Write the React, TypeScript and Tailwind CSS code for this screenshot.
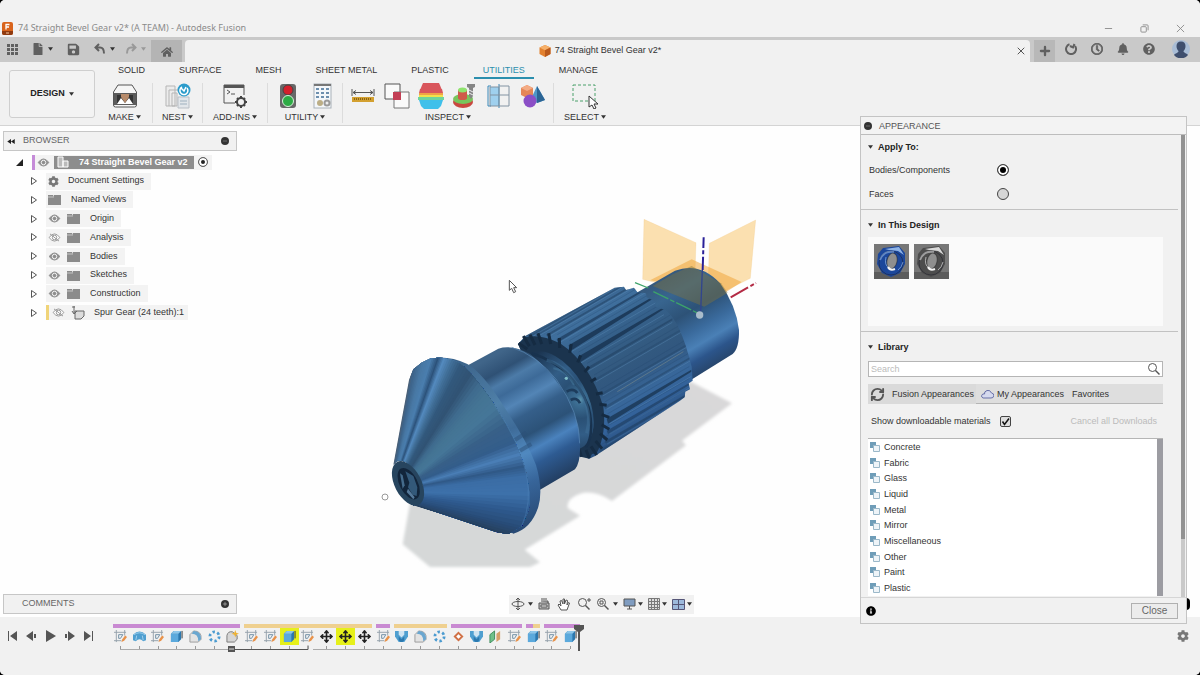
import type { ReactNode } from "react";
import {
  FaBell,
  FaCog,
  FaFile,
  FaHome,
  FaInfoCircle,
  FaQuestionCircle,
  FaRegClock,
  FaSave,
} from "react-icons/fa";
import { Minus, Move, Plus, RefreshCw, X } from "lucide-react";

type Point = [number, number];

const ribbonTabs = ["SOLID", "SURFACE", "MESH", "SHEET METAL", "PLASTIC", "UTILITIES", "MANAGE"];

const materials = [
  "Concrete",
  "Fabric",
  "Glass",
  "Liquid",
  "Metal",
  "Mirror",
  "Miscellaneous",
  "Other",
  "Paint",
  "Plastic",
];

function Caret({ className = "text-[#333]" }: { className?: string }) {
  return (
    <svg viewBox="0 0 6 4" className={`h-1 w-[5px] shrink-0 ${className}`} aria-hidden="true">
      <path d="M0 0h6L3 4z" fill="currentColor" />
    </svg>
  );
}

function Magnifier({ children }: { children?: ReactNode }) {
  return (
    <svg viewBox="0 0 14 14" className="size-[14px]" fill="none" stroke="currentColor" aria-hidden="true">
      <circle cx="5.500" cy="5.500" r="4" />
      <path d="M8.500 8.500l4 4" strokeWidth="1.500" />
      {children}
    </svg>
  );
}

/* ---------- title bar and tab strip ---------- */

function TitleBar() {
  return (
    <div className="flex h-[37px] items-end justify-between bg-[#f2f2f2] pb-[2px] pl-[2px] pr-[15px] text-[#8a8a8a]">
      <div className="flex items-center gap-1">
        <svg viewBox="0 0 12 13" className="h-[13px] w-3" aria-hidden="true">
          <rect width="11" height="13" rx="2" fill="#d9641c" />
          <path d="M0 9h11v2a2 2 0 0 1-2 2H2a2 2 0 0 1-2-2z" fill="#8f3a10" />
          <path d="M4 7.500V2.500h3.500M4 5h3" stroke="#fff" strokeWidth="1.300" fill="none" />
          <path d="M4 11h3" stroke="#f7c9a5" strokeWidth="1" />
        </svg>
        <h1 className="font-['Noto_Sans','Liberation_Sans',sans-serif] text-[9px] leading-[14px]">
          74 Straight Bevel Gear v2* (A TEAM) - Autodesk Fusion
        </h1>
      </div>
      <div className="flex h-[14px] items-center gap-[27px]">
        <button aria-label="Minimize">
          <svg viewBox="0 0 10 10" className="size-[9px]">
            <path d="M1 5h8" stroke="currentColor" />
          </svg>
        </button>
        <button aria-label="Restore">
          <svg viewBox="0 0 10 10" className="size-[9px]" fill="none" stroke="currentColor">
            <rect x="1" y="3" width="6" height="6" rx="1" />
            <path d="M3 1h5a1 1 0 0 1 1 1v5" />
          </svg>
        </button>
        <button aria-label="Close window">
          <svg viewBox="0 0 10 10" className="size-[9px]">
            <path d="M1 1l8 8M9 1l-8 8" stroke="currentColor" />
          </svg>
        </button>
      </div>
    </div>
  );
}

function TabStrip() {
  return (
    <div className="flex h-[25px] items-stretch bg-[#c9c9c9] pt-[3px] text-[#606060]">
      <div className="flex w-[151px] shrink-0 items-center pb-1 pl-[7px]">
        <button aria-label="Show data panel">
          <svg viewBox="0 0 11 11" className="size-[11px]" fill="currentColor">
            <path d="M0 0h3v3H0zM4 0h3v3H4zM8 0h3v3H8zM0 4h3v3H0zM4 4h3v3H4zM8 4h3v3H8zM0 8h3v3H0zM4 8h3v3H4zM8 8h3v3H8z" />
          </svg>
        </button>
        <button aria-label="File" className="ml-[14px] flex items-center gap-1">
          <FaFile className="size-3" />
          <Caret />
        </button>
        <button aria-label="Save" className="ml-[14px]">
          <FaSave className="size-[13px]" />
        </button>
        <button aria-label="Undo" className="ml-[14px] flex items-center gap-1">
          <svg viewBox="0 0 12 12" className="size-3" fill="none" stroke="currentColor" strokeWidth="2">
            <path d="M5 1L1.500 4.500 5 8M2 4.500h4q4 0 4 6" />
          </svg>
          <Caret />
        </button>
        <button aria-label="Redo" className="ml-[10px] flex items-center gap-1 text-[#999]">
          <svg viewBox="0 0 12 12" className="size-3" fill="none" stroke="currentColor" strokeWidth="2">
            <path d="M7 1l3.500 3.500L7 8M10 4.500H6q-4 0-4 6" />
          </svg>
          <Caret className="text-[#999]" />
        </button>
      </div>
      <button aria-label="Home" className="flex w-[31px] shrink-0 items-center justify-center bg-[#b4b4b4] pt-[2px]">
        <FaHome className="size-3" />
      </button>
      <div className="ml-[3px] flex grow items-center rounded-t-sm bg-[#f1f1f1] pr-[3px]">
        <span className="flex grow items-center justify-center gap-1 text-[9px] text-[#333]">
          <svg viewBox="0 0 12 12" className="size-3" aria-hidden="true">
            <path d="M6 0l5.500 2.500v6.500L6 12 .5 9V2.500z" fill="#e2812f" />
            <path d="M6 0l5.500 2.500L6 5.200.5 2.500z" fill="#f6b06a" />
            <path d="M6 5.200V12l5.500-3V2.500z" fill="#b95a1d" />
          </svg>
          74 Straight Bevel Gear v2*
        </span>
        <button aria-label="Close tab" className="text-[#555]">
          <X className="size-3" />
        </button>
      </div>
      <div className="flex w-[170px] shrink-0 items-center pl-1">
        <button aria-label="New tab" className="flex h-full w-[21px] items-center justify-center bg-[#b8b8b8]">
          <Plus className="size-[14px]" strokeWidth={4} />
        </button>
        <div className="flex items-center gap-[14px] pb-1 pl-[10px]">
          <button aria-label="Extensions">
            <svg viewBox="0 0 12 12" className="size-3" fill="none" stroke="currentColor" strokeWidth="2">
              <path d="M4.500 1.300a5 5 0 1 0 5.500 1.700" />
              <path d="M5 3l3 1.500L9.500 1" strokeWidth="2" />
            </svg>
          </button>
          <button aria-label="Job status">
            <FaRegClock className="size-3" stroke="currentColor" strokeWidth="30" />
          </button>
          <button aria-label="Notifications">
            <FaBell className="size-3" />
          </button>
          <button aria-label="Help">
            <FaQuestionCircle className="size-3" />
          </button>
          <button aria-label="Account" className="ml-[3px]">
            <svg viewBox="0 0 18 18" className="size-[18px]">
              <circle cx="9" cy="9" r="9" fill="#a9bdd6" />
              <path d="M9 1.500c-3 0-4.500 2-4.500 4.500s1 4 2 5c0 2-3 2-4.500 4a9 9 0 0 0 14 0c-1.500-2-4.500-2-4.500-4 1-1 2-2.500 2-5S12 1.500 9 1.500z" fill="#3f4f6e" />
            </svg>
          </button>
        </div>
      </div>
    </div>
  );
}

/* ---------- ribbon ---------- */

function ToolIcon({ label, children }: { label: string; children: ReactNode }) {
  return (
    <button aria-label={label} title={label} className="flex w-[34px] justify-center">
      <svg viewBox="0 0 26 26" className="size-[26px]" fill="none">
        {children}
      </svg>
    </button>
  );
}

function ToolGroup({ name, width, last = false, children }: { name: string; width: string; last?: boolean; children: ReactNode }) {
  return (
    <div className={`flex flex-col items-center gap-[2px] ${width} ${last ? "" : "border-r border-[#dcdcdc]"}`}>
      <div className="flex">{children}</div>
      <button className="flex items-center gap-[2px] text-[9px] leading-3 text-[#333]">
        {name}
        <Caret />
      </button>
    </div>
  );
}

function Ribbon() {
  return (
    <div className="flex h-16 border-b border-[#d4d4d4] bg-[#f1f1f1] pl-[9px]">
      <button className="mt-2 flex h-12 w-[86px] shrink-0 items-center justify-center gap-1 rounded-[3px] border border-[#cfcfcf] bg-[#f3f3f3] text-[9px] font-bold text-[#222]">
        DESIGN
        <Caret />
      </button>
      <div className="ml-[2px] flex flex-col">
        <nav className="flex h-[17px] gap-4 pl-3 text-[9px] text-[#333]">
          {ribbonTabs.map((tab) => (
            <a
              key={tab}
              href="#"
              className={`whitespace-nowrap px-[9px] pt-px leading-[14px] ${
                tab === "UTILITIES" ? "border-b-2 border-[#2b8fae] text-[#2b8fae]" : ""
              }`}
            >
              {tab}
            </a>
          ))}
        </nav>
        <div className="mt-1 flex">
          <ToolGroup name="MAKE" width="w-14">
            <ToolIcon label="3D Print">
              <path d="M1.500 9L6 2h14l4.500 7v13a2 2 0 0 1-2 2h-19a2 2 0 0 1-2-2z" fill="#f5f5f5" stroke="#555" />
              <path d="M2 10h22v12H2z" fill="#5b5b5b" />
              <path d="M5 12h16v9H5z" fill="#333" />
              <path d="M5 21l4-6 4 5 4-5 4 6z" fill="#fff" />
              <path d="M9 11h8v3l-4 6-4-6z" fill="#b78b6b" />
            </ToolIcon>
          </ToolGroup>
          <ToolGroup name="NEST" width="w-[50px]">
            <ToolIcon label="Nest">
              <path d="M1 3h9v20H1zM4 7h9M4 7v16M7 10h5v13H7z" stroke="#b5b5b5" fill="#ececec" />
              <path d="M13 14h11v11H13z" fill="#e2e6ea" stroke="#b9bfc6" />
              <path d="M15 18h7M15 21h7" stroke="#9eb0be" />
              <circle cx="19" cy="7" r="6.500" fill="#2c9ccb" />
              <path d="M17 4a4 4 0 1 0 5 1M16 5l3 3 2-4" stroke="#fff" strokeWidth="1.500" />
            </ToolIcon>
          </ToolGroup>
          <ToolGroup name="ADD-INS" width="w-[65px]">
            <ToolIcon label="Scripts and Add-Ins">
              <path d="M13 20H2V2h20v10" stroke="#555" />
              <path d="M2 2h20v3H2z" fill="#555" />
              <path d="M5 7l3 2-3 2M9 11h4" stroke="#555" />
              <circle cx="19" cy="19" r="4" stroke="#444" strokeWidth="2" />
              <path d="M19 13v2M19 23v2M13 19h2M23 19h2M15 15l1 1M22 22l1 1M15 23l1-1M22 16l1-1" stroke="#444" strokeWidth="2" />
            </ToolIcon>
          </ToolGroup>
          <ToolGroup name="UTILITY" width="w-[75px]">
            <ToolIcon label="Compute">
              <rect x="5" y="1" width="16" height="24" rx="3" fill="#686868" />
              <circle cx="13" cy="7" r="5" fill="#d5202c" stroke="#444" />
              <circle cx="13" cy="18" r="5.500" fill="#2dab45" stroke="#d9f2dd" />
            </ToolIcon>
            <ToolIcon label="Parameters">
              <rect x="5" y="1" width="17" height="24" fill="#f4f7fa" stroke="#aab2ba" />
              <path d="M5 2h17" stroke="#777" strokeWidth="2" />
              <path d="M7 6h13M7 10h13M7 14h13" stroke="#6d8fae" strokeWidth="2" strokeDasharray="3 2" />
              <circle cx="11" cy="20" r="3" fill="#bcae86" />
              <circle cx="18" cy="20" r="3.500" fill="#9a9a9a" />
              <circle cx="18" cy="20" r="1.500" fill="#eee" />
            </ToolIcon>
          </ToolGroup>
          <ToolGroup name="INSPECT" width="w-[211px]">
            <ToolIcon label="Measure">
              <path d="M2 6v7M24 6v7M3 9.500h20M6 7.500l-3 2 3 2M20 7.500l3 2-3 2" stroke="#555" />
              <path d="M2 14h22v5H2z" fill="#d3a030" />
              <path d="M4 16h18" stroke="#8a6415" strokeWidth="2" strokeDasharray="1 1" />
            </ToolIcon>
            <ToolIcon label="Interference">
              <path d="M1 1h15v15H1z" fill="#fafafa" stroke="#555" />
              <path d="M10 9h15v16H10z" fill="#fafafa" stroke="#777" />
              <path d="M9 9h8v8H9z" fill="#c23f55" />
            </ToolIcon>
            <ToolIcon label="Zebra Analysis">
              <path d="M5 0h16l3 7H2z" fill="#d9565c" />
              <path d="M2 6h22l1 4H1z" fill="#d9565c" />
              <path d="M1 10h24v2H1z" fill="#f0a445" />
              <path d="M1 12h24v2H1z" fill="#f2e24b" />
              <path d="M0 14h26v3H0z" fill="#6fd49c" />
              <path d="M1 17h24l-2 6-3 3H6l-3-3z" fill="#3fc0ea" />
            </ToolIcon>
            <ToolIcon label="Accessibility">
              <ellipse cx="11" cy="19" rx="10" ry="6" fill="#c9473f" />
              <ellipse cx="11" cy="16" rx="10" ry="5" fill="#77c55c" />
              <path d="M6 7h9v8H6z" fill="#cf5a4a" />
              <ellipse cx="10.500" cy="7" rx="4.500" ry="2.500" fill="#8fe36e" />
              <ellipse cx="10.500" cy="15" rx="4.500" ry="2" fill="#cf5a4a" />
              <path d="M15 1h8v3l-2 1v8l-2 3-2-3V5l-2-1z" fill="#858585" />
              <path d="M17 7l4 2M17 10l4 2" stroke="#eee" />
            </ToolIcon>
            <ToolIcon label="Component Color Cycling">
              <path d="M4 4h9v19H4z" fill="#9fd0ee" />
              <path d="M5 3H2v20h3M13 1v24" stroke="#3b88b8" />
              <path d="M4 12h19M13 3h10v20H13M4 4h9v19H4z" stroke="#8293a2" />
            </ToolIcon>
            <ToolIcon label="Display Mesh Face Groups">
              <path d="M7 2l6 3v7l-6 3-6-3V5z" fill="#e58656" />
              <path d="M1 5l6 3 6-3-6-3z" fill="#f3ab84" />
              <path d="M17 3l8 14-8 3-6-4z" fill="#4f96c8" />
              <path d="M17 3l8 14-8 3z" fill="#2c6595" />
              <circle cx="10" cy="18" r="6.500" fill="#8b4fc6" />
            </ToolIcon>
          </ToolGroup>
          <ToolGroup name="SELECT" width="w-[62px]" last>
            <ToolIcon label="Select">
              <path d="M1 2h22v16H1z" stroke="#4ba06a" strokeDasharray="3 2" />
              <path d="M17 13v11l3-2 2 4 2-1-2-4h4z" fill="#fff" stroke="#333" />
            </ToolIcon>
          </ToolGroup>
        </div>
      </div>
    </div>
  );
}

/* ---------- browser tree ---------- */

function Eye({ off = false }: { off?: boolean }) {
  return (
    <svg viewBox="0 0 14 10" className="h-[9px] w-[13px] shrink-0" fill="none" aria-hidden="true">
      <path d="M1 5q6-8 12 0-6 8-12 0z" fill={off ? "#fff" : "#8e8e8e"} stroke="#8e8e8e" />
      <circle cx="7" cy="5" r="2.500" fill={off ? "none" : "#8e8e8e"} stroke={off ? "#8e8e8e" : "#fff"} />
      {off && <path d="M2 1l10 8" stroke="#8e8e8e" />}
    </svg>
  );
}

function Folder() {
  return (
    <svg viewBox="0 0 13 11" className="h-[11px] w-[13px] shrink-0" aria-hidden="true">
      <path d="M0 1h5l1 2V1h7v10H0z" fill="#8b8b8b" />
      <path d="M0 3h6" stroke="#c4c4c4" />
    </svg>
  );
}

function Expander() {
  return (
    <button aria-label="Expand" className="mr-[9px] shrink-0">
      <svg viewBox="0 0 6 8" className="h-2 w-[6px]" fill="#fff">
        <path d="M.5.5L5.500 4 .5 7.500z" stroke="#555" />
      </svg>
    </button>
  );
}

function TreeRow({ name, eye }: { name: string; eye?: "on" | "off" }) {
  return (
    <li className="flex items-center pl-[31px]">
      <Expander />
      <span className="flex h-[17px] items-center bg-[#f3f3f3] pl-[2px] pr-[7px]">
        {eye && (
          <span className="mr-[6px] flex">
            <Eye off={eye === "off"} />
          </span>
        )}
        {name === "Document Settings" ? <FaCog className="mr-[9px] size-[11px] text-[#777]" /> : <Folder />}
        <span className={name === "Document Settings" ? "" : "ml-[10px]"}>{name}</span>
      </span>
    </li>
  );
}

function Browser() {
  return (
    <section className="mx-[3px] mt-[5px] w-[234px]">
      <header className="flex h-5 items-center border border-[#c6c6c6] bg-[#f1f1f1] pl-[3px] pr-[7px] text-[9px] text-[#666]">
        <button aria-label="Collapse browser">
          <svg viewBox="0 0 9 6" className="h-[5px] w-2" fill="#222">
            <path d="M4.500 0v6L0 3zM9 0v6L4.500 3z" />
          </svg>
        </button>
        <h2 className="ml-2 grow">BROWSER</h2>
        <button aria-label="Pin browser" className="flex size-2 items-center justify-center rounded-full bg-[#333]">
          <Minus className="size-[6px] text-[#aaa]" />
        </button>
      </header>
      <ul className="-ml-[3px] mt-[2px] grid h-[169px] auto-rows-fr text-[9px] text-[#333]">
        <li className="flex items-center pl-4">
          <button aria-label="Collapse" className="mr-[9px]">
            <svg viewBox="0 0 7 7" className="size-[7px]" fill="#222">
              <path d="M7 0v7H0z" />
            </svg>
          </button>
          <span className="flex h-[15px] items-center border-l-[3px] border-[#c58bd8] bg-[#f3f3f3] pl-[2px] pr-1">
            <Eye />
            <span className="ml-1 flex h-[13px] items-center bg-[#8d8d8d] pl-[3px] pr-[6px] font-bold text-white">
              <svg viewBox="0 0 12 12" className="mr-[10px] size-3" fill="#bbb" stroke="#fff" aria-hidden="true">
                <path d="M1 1h5v10H1zM6 5h5v6H6z" />
              </svg>
              74 Straight Bevel Gear v2
            </span>
            <input
              type="radio"
              defaultChecked
              aria-label="Activate component"
              className="ml-1 size-[10px] appearance-none rounded-full border border-[#666] bg-[#222] shadow-[inset_0_0_0_2px_white]"
            />
          </span>
        </li>
        <TreeRow name="Document Settings" />
        <TreeRow name="Named Views" />
        <TreeRow name="Origin" eye="on" />
        <TreeRow name="Analysis" eye="off" />
        <TreeRow name="Bodies" eye="on" />
        <TreeRow name="Sketches" eye="on" />
        <TreeRow name="Construction" eye="on" />
        <li className="flex items-center pl-[31px]">
          <Expander />
          <span className="flex h-[15px] items-center border-l-[3px] border-[#f0d479] bg-[#f3f3f3] pl-[3px] pr-1">
            <Eye off />
            <svg viewBox="0 0 14 14" className="ml-[6px] mr-[9px] size-[14px]" fill="none" stroke="#666" aria-hidden="true">
              <path d="M4 5h9v5l-3 3H4z" fill="#dcdcdc" />
              <path d="M3 0v7M1 5l2 3 3-3M1 1h3" />
            </svg>
            Spur Gear (24 teeth):1
          </span>
        </li>
      </ul>
    </section>
  );
}

/* ---------- model ---------- */

const mix = (a: number, b: number, t: number) => a + (b - a) * t;

const mixHex = (a: string, b: string, t: number) => {
  const channel = (hex: string, i: number) => parseInt(hex.slice(1 + i * 2, 3 + i * 2), 16);
  return `rgb(${[0, 1, 2].map((i) => Math.round(mix(channel(a, i), channel(b, i), t))).join(",")})`;
};

// Bevel surface: tip edge, rim edge and shade, going round the cone.
const bevel: { tip: Point; rim: Point; shade: string }[] = [
  { tip: [40, 765], rim: [87, 510], shade: "#4b6076" },
  { tip: [48, 756], rim: [100, 478], shade: "#3e658c" },
  { tip: [54, 752], rim: [125, 458], shade: "#4878a4" },
  { tip: [60, 751], rim: [150, 446], shade: "#4a7eae" },
  { tip: [66, 752], rim: [172, 443], shade: "#2c527a" },
  { tip: [72, 754], rim: [190, 444], shade: "#5389bd" },
  { tip: [79, 757], rim: [215, 449], shade: "#416f98" },
  { tip: [86, 762], rim: [240, 460], shade: "#32587c" },
  { tip: [94, 770], rim: [268, 485], shade: "#315374" },
  { tip: [100, 777], rim: [295, 518], shade: "#3f6b8e" },
  { tip: [106, 784], rim: [318, 548], shade: "#447494" },
  { tip: [112, 792], rim: [343, 584], shade: "#457698" },
  { tip: [118, 801], rim: [375, 638], shade: "#386088" },
  { tip: [123, 810], rim: [402, 690], shade: "#335d8b" },
  { tip: [127, 818], rim: [418, 728], shade: "#4a7eb6" },
  { tip: [129, 825], rim: [432, 765], shade: "#305987" },
  { tip: [130, 834], rim: [440, 795], shade: "#3b6da5" },
  { tip: [129, 846], rim: [448, 845], shade: "#3d71aa" },
  { tip: [126, 860], rim: [447, 897], shade: "#2f5b90" },
  { tip: [117, 876], rim: [425, 948], shade: "#284c78" },
  { tip: [100, 886], rim: [385, 972], shade: "#27415f" },
  { tip: [92, 880], rim: [350, 966], shade: "#27415f" },
];

// Each facet runs on to the end of the surface and the next one covers it, so no seams show.
const bevelFacets = bevel.slice(1).flatMap((to, i) => {
  const from = bevel[i];
  const rest = bevel.slice(i + 1);
  return [0, 1, 2, 3].map((step) => {
    const t = step / 4;
    const tip: Point = [mix(from.tip[0], to.tip[0], t), mix(from.tip[1], to.tip[1], t)];
    const rim: Point = [mix(from.rim[0], to.rim[0], t), mix(from.rim[1], to.rim[1], t)];
    return {
      points: [tip, rim, ...rest.map((r) => r.rim), ...rest.map((r) => r.tip).reverse()].join(" "),
      fill: mixHex(from.shade, to.shade, t),
    };
  });
});

// Gear teeth: front tip, length along the shaft, width and strength of the groove beneath.
const teeth: [x: number, y: number, length: number, width: number, depth: number][] = [
  [430, 378, 275, 4, 0.4],
  [450, 374, 285, 5, 0.4],
  [474, 370, 285, 4, 0.35],
  [506, 370, 275, 5, 0.5],
  [538, 384, 260, 9, 0.7],
  [574, 402, 252, 18, 1],
  [602, 436, 250, 18, 1],
  [627, 470, 250, 7, 0.5],
  [648, 505, 260, 5, 0.25],
  [668, 548, 260, 5, 0.3],
  [680, 586, 250, 7, 0.4],
  [688, 622, 246, 15, 0.9],
  [688, 658, 246, 10, 0.6],
  [682, 690, 240, 7, 0.5],
  [666, 716, 252, 6, 0.4],
  [650, 735, 262, 5, 0.4],
];

const gearOutline =
  "M414 402L436 378L704 233L732 230L738 240L762 233L772 246L798 250L800 262L828 275L826 290L856 300Q900 330 935 470L938 512L926 520L930 538L916 545L914 562L900 572L645 738L628 746L612 738L600 742L520 640z";

function Model() {
  return (
    <svg
      viewBox="0 0 1200 1110"
      className="absolute left-[380px] top-[84px] h-[370px] w-[400px]"
      role="img"
      aria-label="Straight bevel gear shaft"
    >
      <defs>
        <linearGradient id="shaft" gradientUnits="userSpaceOnUse" x1="880" y1="180" x2="1040" y2="450">
          <stop offset="0" stopColor="#35587c" />
          <stop offset=".2" stopColor="#38658f" />
          <stop offset=".42" stopColor="#2d5277" />
          <stop offset=".6" stopColor="#3a6a9c" />
          <stop offset=".74" stopColor="#4a80b6" />
          <stop offset=".86" stopColor="#2c558b" />
          <stop offset="1" stopColor="#27456a" />
        </linearGradient>
        <linearGradient id="gear" gradientUnits="userSpaceOnUse" x1="560" y1="300" x2="780" y2="680">
          <stop offset="0" stopColor="#37608a" />
          <stop offset=".12" stopColor="#3f6f9d" />
          <stop offset=".3" stopColor="#35608a" />
          <stop offset=".48" stopColor="#335a80" />
          <stop offset=".6" stopColor="#31577f" />
          <stop offset=".74" stopColor="#38679a" />
          <stop offset=".85" stopColor="#33629a" />
          <stop offset="1" stopColor="#274a76" />
        </linearGradient>
        <linearGradient id="collar" gradientUnits="userSpaceOnUse" x1="385" y1="412" x2="590" y2="775">
          <stop offset="0" stopColor="#406589" />
          <stop offset=".12" stopColor="#2f5175" />
          <stop offset=".2" stopColor="#4c7ba8" />
          <stop offset=".28" stopColor="#3d6a98" />
          <stop offset=".38" stopColor="#5385b6" />
          <stop offset=".48" stopColor="#355f8a" />
          <stop offset=".62" stopColor="#2c5278" />
          <stop offset=".73" stopColor="#4a82bd" />
          <stop offset=".83" stopColor="#2e5b92" />
          <stop offset="1" stopColor="#233f63" />
        </linearGradient>
        <linearGradient id="rim" gradientUnits="userSpaceOnUse" x1="230" y1="450" x2="450" y2="970">
          <stop offset="0" stopColor="#3b6288" />
          <stop offset=".3" stopColor="#4f80a9" />
          <stop offset=".45" stopColor="#3e6b98" />
          <stop offset=".6" stopColor="#5089c0" />
          <stop offset=".75" stopColor="#37659a" />
          <stop offset="1" stopColor="#26456d" />
        </linearGradient>
        <radialGradient id="neck" gradientUnits="userSpaceOnUse" cx="560" cy="505" r="190">
          <stop offset="0" stopColor="#5b93ad" />
          <stop offset=".08" stopColor="#3c6e93" />
          <stop offset=".3" stopColor="#2a5075" />
          <stop offset=".55" stopColor="#325d86" />
          <stop offset="1" stopColor="#1b3450" />
        </radialGradient>
        <linearGradient id="shadow" x1="0" y1="1" x2="1" y2="0">
          <stop offset="0" stopColor="#d5d8d8" />
          <stop offset="1" stopColor="#d9d8d9" />
        </linearGradient>
        <filter id="soft" x="-5%" y="-5%" width="110%" height="110%">
          <feGaussianBlur stdDeviation="4" />
        </filter>
        <clipPath id="gear-clip">
          <path d={gearOutline} />
        </clipPath>
      </defs>

      <path
        d="M90 880L68 1003l82 68h300l30-14-46-38 166-102-36-22q-8-28 36-44 42-12 96 22L918 706l-12-14 150-112-126-66-330 200z"
        fill="url(#shadow)"
        filter="url(#soft)"
      />

      <g fill="#f9cf85" fillOpacity=".65" stroke="#eeb95f" strokeOpacity=".5">
        <path d="M792 28l156 70-3 90-40 50-117-30z" />
        <path d="M1127 30L988 100l-3 110 45 35 81-40z" />
      </g>
      <path d="M935 148l150 68-55 35-220-40z" fill="#f0a63c" fillOpacity=".55" />

      {/* shaft */}
      <path d="M770 248L885 182Q960 155 1020 220Q1068 285 1077 360Q1078 415 1058 432L900 530L600 700L600 400z" fill="url(#shaft)" />
      <path d="M1052 262L1128 219" stroke="#b32a44" strokeWidth="6" strokeDasharray="60 8 12 6" />

      {/* gear */}
      <path d={gearOutline} fill="url(#gear)" />
      <g clipPath="url(#gear-clip)">
        {teeth.map(([x, y, length, width, depth]) => (
          <g key={`${x}-${y}`}>
            <path
              d={`M${x - 8} ${y + 4}L${x + length} ${y - length * 0.58}v6L${x - 4} ${y + 4 + width}z`}
              fill="#1d3b5b"
              fillOpacity={depth}
            />
            <path
              d={`M${x} ${y + width + 5}l${length} ${-length * 0.58}`}
              stroke="#6191bd"
              strokeWidth="3"
              strokeOpacity=".35"
            />
            <path
              d={`M${x - 6} ${y - 10}l${length} ${-length * 0.58}`}
              stroke="#24466a"
              strokeWidth="2"
              strokeOpacity=".4"
            />
          </g>
        ))}
      </g>
      <path d="M712 545L910 425" stroke="#8b958c" strokeWidth="2" strokeOpacity=".7" />
      <path d="M414 402l8 18 120 120 60 200 26 6 8-14 14-2q30-60 20-140-40-130-130-190-60-30-104-18z" fill="#1b344e" />
      <g stroke="#152b42" strokeWidth="9">
        {teeth.map(([x, y]) => (
          <path key={`${x}-${y}`} d={`M${x} ${y}L${Math.round(mix(x, 545, 0.16))} ${Math.round(mix(y, 570, 0.16))}`} />
        ))}
        <path d="M416 400l26 18M628 744l-10-24M604 740l-6-20" />
      </g>
      <ellipse cx="525" cy="572" rx="162" ry="96" transform="rotate(60 525 572)" fill="url(#neck)" />
      <path d="M455 430Q580 470 625 590Q645 670 618 712" stroke="#18324e" strokeWidth="8" fill="none" />
      <path d="M500 450q70 20 110 110 26 60 10 110" stroke="#3f6f98" strokeWidth="10" strokeOpacity=".5" fill="none" />
      <path d="M520 475q40 6 62 50" stroke="#4d84a8" strokeWidth="6" strokeOpacity=".4" fill="none" />
      <path d="M560 545q20-12 32 4M572 570q20-10 28 10" stroke="#1d3c5c" strokeWidth="8" fill="none" />
      <circle cx="559" cy="505" r="5" fill="#7fbcc6" />

      {/* collar */}
      <path d="M265 465L355 416Q395 402 450 432Q520 485 565 570Q600 640 600 705Q602 755 585 778L470 845L350 700z" fill="url(#collar)" />
      <path d="M395 412Q470 435 530 510Q600 610 599 700" stroke="#5b8ab6" strokeWidth="2" fill="none" />

      {/* bevel */}
      <path d="M170 443Q215 440 262 462Q310 490 372 590Q440 690 468 765Q490 840 475 890Q455 955 400 971L300 900z" fill="url(#rim)" />
      {bevelFacets.map(({ points, fill }) => (
        <polygon key={points} points={points} fill={fill} />
      ))}
      <path d="M343 584Q420 700 440 795Q456 880 425 948" stroke="#5488bd" strokeWidth="2" strokeOpacity=".6" fill="none" />
      <path d="M405 690l34-22M420 722l34-20" stroke="#2c5078" strokeWidth="12" strokeOpacity=".5" />
      <ellipse cx="84" cy="820" rx="72" ry="40" transform="rotate(63 84 820)" fill="#27455f" />
      <ellipse cx="86" cy="821" rx="51" ry="27" transform="rotate(63 86 821)" fill="#12253b" />
      <path d="M76 784l24 14 12 34-2 26-12-4-14-22 4-14z" fill="#33597a" />
      <path d="M60 790l8 6 6 30-6 10z" fill="#456b8c" />
      <path d="M84 836l20 26-4 6-20-22z" fill="#55799a" />

      {/* origin planes and axes seen through the shaft */}
      <path d="M935 168l88 52 20 28-70 42-155-62 60-35z" fill="#7f7440" fillOpacity=".45" />
      <path d="M765 218l40 16M820 245L955 310" stroke="#3da36a" strokeWidth="4" strokeDasharray="50 6 14 6" />
      <path d="M971 82L968 180" stroke="#2a2098" strokeWidth="6" strokeDasharray="32 7 12 7 60" />
      <path d="M967 180L962 305" stroke="#31458e" strokeWidth="4" />
      <circle cx="959" cy="315" r="11" fill="#a9bccb" />

      <circle cx="15" cy="861" r="9" fill="#fff" stroke="#999" strokeWidth="3" />
      <path d="M388 211v30l7-6 6 13 6-3-6-12h9z" fill="#fff" stroke="#555" strokeWidth="3" />
    </svg>
  );
}

/* ---------- bottom bars ---------- */

function NavBar() {
  return (
    <div className="flex h-[19px] items-center gap-[5px] bg-[#f1f1f1] px-[2px] text-[#555]">
      <button aria-label="Orbit" className="flex items-center gap-[3px]">
        <svg viewBox="0 0 14 14" className="size-[14px]" fill="none" stroke="currentColor">
          <ellipse cx="7" cy="7" rx="6" ry="2.500" />
          <path d="M7 1v12M5 3l2-2 2 2M5 11l2 2 2-2" />
        </svg>
        <Caret />
      </button>
      <button aria-label="Look At">
        <svg viewBox="0 0 12 12" className="size-3" fill="#bbb" stroke="currentColor">
          <path d="M1 5h10v6H1zM3 3h7v2M3 1h6" />
          <path d="M3 7h6v2H3z" fill="#fff" />
        </svg>
      </button>
      <button aria-label="Pan" className="mx-[2px]">
        <svg viewBox="0 0 13 13" className="size-[13px]" fill="#fff" stroke="currentColor">
          <path d="M4 12L1 7l1-1 2 2-1-5 1.500-.5L6 6V1h1.500v5L9 2l1.500.5L10 7l1.500-2.500 1 .5L10 12z" />
        </svg>
      </button>
      <button aria-label="Zoom">
        <Magnifier>
          <path d="M10 3h4M12 1v4" />
        </Magnifier>
      </button>
      <button aria-label="Fit" className="flex items-center gap-[3px]">
        <Magnifier>
          <path d="M4 4h3v3H4z" />
        </Magnifier>
        <Caret />
      </button>
      <button aria-label="Display Settings" className="flex items-center gap-[2px]">
        <svg viewBox="0 0 13 12" className="h-3 w-[13px]" fill="#7f9cc0" stroke="currentColor">
          <path d="M1 1h11v7H1zM4 11h5M6.500 8v3" />
        </svg>
        <Caret />
      </button>
      <button aria-label="Grid and Snaps" className="flex items-center gap-[2px]">
        <svg viewBox="0 0 12 12" className="size-3" fill="#ddd" stroke="#777">
          <path d="M.5.5h11v11H.5zM3.500 0v12M6.500 0v12M9.500 0v12M0 3.500h12M0 6.500h12M0 9.500h12" />
        </svg>
        <Caret />
      </button>
      <button aria-label="Viewports" className="flex items-center gap-[2px]">
        <svg viewBox="0 0 13 11" className="h-[11px] w-[13px]" fill="#9cb9dc" stroke="#557">
          <path d="M.5.5h12v10H.5zM6.500 0v11M0 5.500h13" />
        </svg>
        <Caret />
      </button>
    </div>
  );
}

type Feature =
  | "sketch"
  | "revolve"
  | "extrude"
  | "fillet"
  | "pattern"
  | "form"
  | "move"
  | "hole"
  | "point"
  | "plane";

const featureArt: Record<Feature, ReactNode> = {
  sketch: (
    <>
      <path d="M2.500 0v13M0 2.500h13M0 11.500h8M11.500 0v6" stroke="#93a0ab" />
      <path d="M5 5h4.500L7 9H5z" stroke="#6d8ca3" />
      <path d="M8 13l1-3 3-4 2 1.500-3 4z" fill="#e8924a" />
    </>
  ),
  revolve: (
    <>
      <path d="M0 5q7-7 14 0v6l-3 1q-4-4-8 0l-3-1z" fill="#4f9fd0" />
      <path d="M1 5q6-4 12 0M4 6l-1 5M10 6l1 5" stroke="#a5d3ef" />
    </>
  ),
  extrude: (
    <>
      <path d="M1 4l3-3h8v9l-3 3H1z" fill="#2c78ae" />
      <path d="M1 4h8v9H1z" fill="#5ba9dc" />
      <path d="M1 4l3-3h8L9 4z" fill="#8cc6ea" />
      <path d="M13 9V1" stroke="#333" />
    </>
  ),
  fillet: (
    <>
      <path d="M1 13V5l4-4q9 0 8 9l-3 3z" fill="#e3e3e3" stroke="#999" />
      <path d="M5 1q8 0 8 9l-3 2Q10 4 3 4z" fill="#6aa7d0" />
    </>
  ),
  pattern: <circle cx="7" cy="7" r="5" stroke="#4b9bd0" strokeWidth="3" strokeDasharray="2.600 2.600" />,
  form: (
    <>
      <path d="M1 13V6q1-5 6-4l5 4v4l-3 3z" fill="#d6d6d6" stroke="#777" />
      <path d="M10 0l1 3 3 1-3 1-1 3-1-3-3-1 3-1z" fill="#eeb233" />
    </>
  ),
  move: null,
  hole: (
    <>
      <path d="M0 1h14v6l-4 6H4L0 7z" fill="#4f9fd0" />
      <path d="M4 1h6v4L7 8 4 5z" fill="#cfe4f2" />
      <path d="M4 7l3 3 3-3v4l-2 2H6l-2-2z" fill="#2c78ae" />
    </>
  ),
  point: <path d="M7 3l4 4-4 4-4-4z" stroke="#d07045" strokeWidth="2" fill="#fff" />,
  plane: (
    <>
      <path d="M1 5l5-4v9l-5 4z" fill="#6fc08a" stroke="#3f8c5c" />
      <path d="M8 4l4-3v9l-4 3z" fill="#d6a06a" />
    </>
  ),
};

const timeline: Feature[] = [
  "sketch",
  "revolve",
  "sketch",
  "extrude",
  "fillet",
  "pattern",
  "form",
  "sketch",
  "sketch",
  "extrude",
  "sketch",
  "move",
  "move",
  "move",
  "sketch",
  "hole",
  "fillet",
  "pattern",
  "point",
  "hole",
  "plane",
  "sketch",
  "extrude",
  "sketch",
  "extrude",
];

const highlighted = [9, 12];

function Timeline() {
  return (
    <footer className="flex h-[58px] items-start bg-[#f1f1f1] pt-[7px] text-[#555]">
      <div className="flex w-[111px] shrink-0 items-center gap-2 pl-[7px] pt-[6px]">
        <button aria-label="Go to start">
          <svg viewBox="0 0 11 12" className="h-3 w-[11px]" fill="currentColor">
            <path d="M1 1h1v10H1zM10 1v10L3 6z" />
          </svg>
        </button>
        <button aria-label="Step back">
          <svg viewBox="0 0 11 12" className="h-3 w-[11px]" fill="currentColor">
            <path d="M7 1v10L0 6zM8 4h2v4H8z" />
          </svg>
        </button>
        <button aria-label="Play">
          <svg viewBox="0 0 11 12" className="h-3 w-[11px]" fill="currentColor">
            <path d="M1 0l10 6-10 6z" />
          </svg>
        </button>
        <button aria-label="Step forward">
          <svg viewBox="0 0 11 12" className="h-3 w-[11px]" fill="currentColor">
            <path d="M4 1v10l7-5zM1 4h2v4H1z" />
          </svg>
        </button>
        <button aria-label="Go to end">
          <svg viewBox="0 0 11 12" className="h-3 w-[11px]" fill="currentColor">
            <path d="M9 1h1v10H9zM1 1v10l7-5z" />
          </svg>
        </button>
      </div>

      <div className="relative w-[469px] shrink-0">
        <div className="grid h-1 grid-cols-[repeat(25,1fr)]">
          <span className="col-span-7 mx-[2px] bg-[#c98ad2]" />
          <span className="col-span-7 mx-[2px] bg-[#efd08f]" />
          <span className="mx-[2px] bg-[#c98ad2]" />
          <span className="col-span-3 mx-[2px] bg-[#efd08f]" />
          <span className="col-span-4 mx-[2px] bg-[#c98ad2]" />
          <span className="mx-[2px] flex">
            <span className="w-1/2 bg-[#c98ad2]" />
            <span className="w-1/2 bg-[#efd08f]" />
          </span>
          <span className="col-span-2 ml-[2px] bg-[#c98ad2]" />
        </div>
        <ol className="grid grid-cols-[repeat(25,1fr)]">
          {timeline.map((feature, i) => (
            <li key={i} className={`flex h-[17px] items-center justify-center ${highlighted.includes(i) ? "bg-[#e6f01a]" : ""}`}>
              <button aria-label={`${feature} ${i + 1}`}>
                {feature === "move" ? (
                  <Move className="size-[13px] text-[#222]" strokeWidth={3} />
                ) : (
                  <svg viewBox="0 0 14 14" className="size-[13px]" fill="none">
                    {featureArt[feature]}
                  </svg>
                )}
              </button>
            </li>
          ))}
        </ol>
        <svg viewBox="0 0 469 8" className="h-2 w-full" fill="none" aria-hidden="true">
          <path d="M9 4.500h110M202 4.500h257" stroke="#aaa" />
          <path d="M121 4.500h76v-4" stroke="#555" />
          {timeline.map((_, i) => (
            <path key={i} d={`M${Math.round(9 + i * 18.75)}.5 1v3`} stroke="#999" />
          ))}
          <rect x="117" y="1" width="7" height="6" fill="#555" />
          <path d="M118 4h5" stroke="#ddd" />
        </svg>
        <svg viewBox="0 0 10 26" className="absolute -right-1 top-px h-[26px] w-[10px]" fill="#555" aria-hidden="true">
          <path d="M0 0h10v4L6 7v19H4V7L0 4z" />
        </svg>
      </div>

      <button aria-label="Timeline settings" className="ml-auto mr-[11px] mt-[6px] text-[#777]">
        <FaCog className="size-3" />
      </button>
    </footer>
  );
}

/* ---------- appearance dialog ---------- */

function SectionTitle({ children }: { children: ReactNode }) {
  return (
    <h3 className="flex h-3 items-center gap-[5px] pl-[7px] text-[9px] font-bold text-[#222]">
      <Caret />
      {children}
    </h3>
  );
}

function Swatch({ label, base, light }: { label: string; base: string; light: string }) {
  return (
    <button aria-label={label} className="size-[35px] bg-[#777]">
      <svg viewBox="0 0 35 35" fill="none">
        <path d="M0 28h35v7H0z" fill="#5c5c5c" />
        <path d="M9 4l16-2 6 7v11l-5 9-9 4-9-4-5-9 1-10z" fill={base} />
        <path d="M11 5l14-2 5 8-6-4-9-1z" fill={light} />
        <circle cx="17" cy="19" r="12" stroke="#1d1d2a" strokeOpacity=".5" />
        <path d="M6 16q4-10 14-8" stroke={light} strokeWidth="2" strokeOpacity=".6" />
        <ellipse cx="18" cy="17" rx="5" ry="8" fill="#8f8f8f" stroke="#222" strokeOpacity=".5" transform="rotate(12 18 17)" />
        <path d="M12 13q-2 8 3 11M24 26q4-3 5-8" stroke={light} strokeOpacity=".7" />
        <path d="M14 23q2 4 7 2" stroke="#f4f4f4" strokeWidth="2" />
      </svg>
    </button>
  );
}

function AppearanceDialog() {
  return (
    <section
      aria-label="Appearance"
      className="absolute right-[13px] top-[116px] flex w-[327px] flex-col border border-[#c4c4c4] bg-[#f1f1f1] text-[9px] leading-3 text-[#333]"
    >
      <header className="flex h-[18px] items-center gap-[7px] border-b border-[#bdbdbd] bg-[#f3f3f3] pl-[3px] text-[#555]">
        <button aria-label="Collapse dialog" className="flex size-2 items-center justify-center rounded-full bg-[#333]">
          <Minus className="size-[6px] text-[#aaa]" />
        </button>
        <h2>APPEARANCE</h2>
      </header>

      <div className="flex h-[462px] overflow-hidden">
        <div className="grow">
          <fieldset className="border-b border-[#c2c2c2] pb-[9px] pt-[6px]">
            <SectionTitle>Apply To:</SectionTitle>
            <div className="mt-[11px] grid grid-cols-[128px_auto] items-center justify-start gap-y-3 pl-2">
              <label htmlFor="bodies">Bodies/Components</label>
              <input
                id="bodies"
                type="radio"
                name="target"
                defaultChecked
                className="size-3 appearance-none rounded-full border border-[#444] bg-white checked:bg-black checked:shadow-[inset_0_0_0_2px_white]"
              />
              <label htmlFor="faces">Faces</label>
              <input
                id="faces"
                type="radio"
                name="target"
                className="size-3 appearance-none rounded-full border border-[#444] bg-[#d6d6d6] checked:bg-black checked:shadow-[inset_0_0_0_2px_white]"
              />
            </div>
          </fieldset>

          <div className="border-b border-[#c2c2c2] pb-[5px] pt-[9px]">
            <SectionTitle>In This Design</SectionTitle>
            <div className="ml-[7px] mr-[15px] mt-[6px] flex h-[89px] items-start gap-[5px] bg-[#fafafa] p-[6px] pt-[7px]">
              <Swatch label="Paint - Blue" base="#1c479b" light="#8fb4e6" />
              <Swatch label="Steel - Satin" base="#4d4d4d" light="#d8d8d8" />
            </div>
          </div>

          <div className="pt-[9px]">
            <SectionTitle>Library</SectionTitle>
            <div className="ml-[7px] mr-[15px]">
              <div className="mt-2 flex h-4 items-center border border-[#b5b5b5] bg-white pl-[2px] pr-px text-[#555]">
                <input
                  type="search"
                  aria-label="Search library"
                  placeholder="Search"
                  className="min-w-0 grow text-[9px] leading-3 outline-none placeholder:text-[#bbb]"
                />
                <Magnifier />
              </div>

              <div role="tablist" className="mt-[7px] flex h-5 items-stretch bg-[#dedede]">
                <button role="tab" aria-selected="true" className="flex items-center gap-[7px] bg-[#dadada] pl-[2px] pr-[2px]">
                  <RefreshCw className="size-[15px] text-[#555]" strokeWidth={3} />
                  Fusion Appearances
                </button>
                <button role="tab" aria-selected="false" className="flex grow items-center gap-[3px] border-b border-[#b5b5b5] pl-1">
                  <svg viewBox="0 0 14 10" className="h-[10px] w-[14px]" fill="#d5d9ee" stroke="#6870a8" aria-hidden="true">
                    <path d="M3 9h8a2.500 2.500 0 0 0 .5-5Q10 .5 7 1.500T4.500 5A2 2 0 0 0 3 9z" />
                  </svg>
                  <span>My Appearances</span>
                </button>
                <button role="tab" aria-selected="false" className="w-[95px] border-b border-[#b5b5b5] pl-1 text-left">
                  Favorites
                </button>
              </div>

              <div className="mt-[11px] flex h-3 items-center pl-[3px] pr-[6px]">
                <label htmlFor="downloadable" className="w-[129px]">
                  Show downloadable materials
                </label>
                <span className="grid size-[11px] *:col-start-1 *:row-start-1">
                  <input
                    id="downloadable"
                    type="checkbox"
                    defaultChecked
                    className="peer size-[11px] appearance-none rounded-[2px] border border-[#444] bg-[#dedede]"
                  />
                  <svg viewBox="0 0 11 11" className="pointer-events-none hidden size-[11px] peer-checked:block" fill="none" aria-hidden="true">
                    <path d="M2.500 5.500l2 3 4.500-6" stroke="#111" strokeWidth="1.500" />
                  </svg>
                </span>
                <button disabled className="ml-auto text-[#bbb]">
                  Cancel all Downloads
                </button>
              </div>

              <div className="mt-[11px] flex border-t border-[#b5b5b5] bg-white">
                <ul className="grid h-[157px] grow auto-rows-fr">
                  {materials.map((name) => (
                    <li key={name} className="flex items-center gap-1 pl-[2px]">
                      <svg viewBox="0 0 10 10" className="size-[10px]" aria-hidden="true">
                        <path d="M0 0h6v6H0z" fill="#6f9db8" />
                        <path d="M3.500 3.500h6v6h-6z" fill="#eef4f8" stroke="#9bb8c9" />
                      </svg>
                      {name}
                    </li>
                  ))}
                </ul>
                <div className="w-[6px] bg-[#9c9ca2]" />
              </div>
            </div>
          </div>
        </div>
        <div className="ml-[3px] mr-px w-1 shrink-0 bg-[#c9c9c9]">
          <div className="h-[404px] bg-[#929292]" />
        </div>
      </div>

      <footer className="flex h-[26px] items-center justify-between border-t border-[#d6d6d6] pl-[5px] pr-2">
        <FaInfoCircle className="size-[10px] text-black" />
        <button className="h-4 w-[47px] border border-[#b0b0b0] bg-[#ececec] text-[10px] leading-3 text-[#666]">Close</button>
      </footer>
    </section>
  );
}

export default function App() {
  return (
    <div className="min-h-screen bg-black">
      <div className="relative flex min-h-screen flex-col overflow-hidden rounded-[5px] bg-[#f1f1f1] font-['Liberation_Sans',Arial,sans-serif]">
        <TitleBar />
        <TabStrip />
        <Ribbon />
        <main className="relative flex grow flex-col justify-between bg-[#fefefe]">
          <Model />
          <Browser />
          <div className="mb-[3px] grid grid-cols-[1fr_auto_1fr] items-center pl-[3px]">
            <div className="flex h-5 w-[234px] items-center justify-between border border-[#c6c6c6] bg-[#f1f1f1] pl-[18px] pr-[7px] text-[9px] text-[#666]">
              <h2>COMMENTS</h2>
              <button aria-label="Add comment" className="flex size-2 items-center justify-center rounded-full bg-[#333]">
                <Plus className="size-[6px] text-[#ddd]" />
              </button>
            </div>
            <NavBar />
            <span className="mr-[10px] h-3 w-2 justify-self-end rounded-sm bg-black" />
          </div>
        </main>
        <Timeline />
        <AppearanceDialog />
      </div>
    </div>
  );
}
